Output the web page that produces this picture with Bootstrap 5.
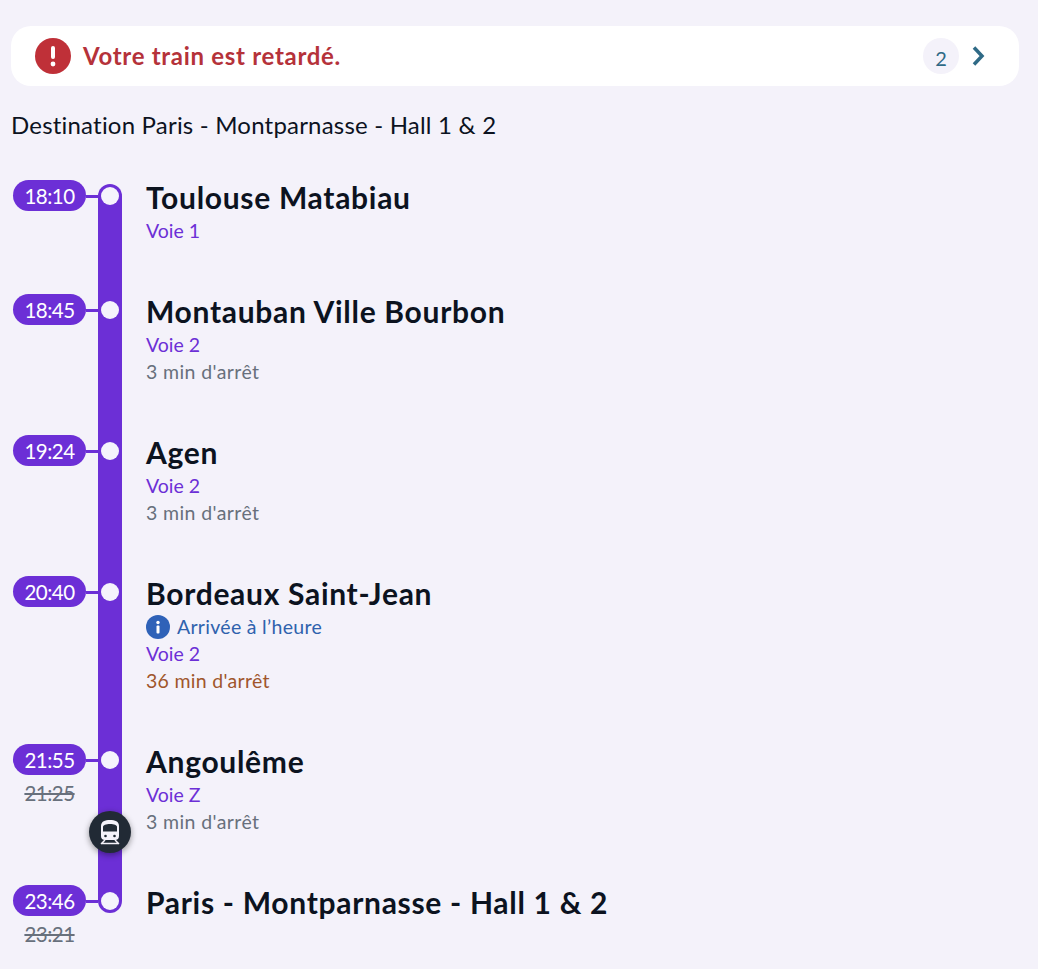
<!DOCTYPE html>
<html lang="fr">
  <head>
    <meta charset="UTF-8" />
    <title>Votre train</title>
    <link rel="stylesheet" href="https://cdn.jsdelivr.net/npm/bootstrap@5.3.3/dist/css/bootstrap.min.css" />
    <style>
      body { background: #f4f2fa; font-family: "Lato", "Liberation Sans", sans-serif; font-variant-ligatures: none; color: #0c131f; padding: 26px 19px 0 11px; }
      .alert-bar { background: #fff; border-radius: 20px; height: 60px; padding: 0 33px 0 24px; }
      .alert-text { color: #b5323a; font-size: 24px; font-weight: 700; margin-left: 12px; letter-spacing: .7px; }
      .count-dot { width: 36px; height: 36px; border-radius: 50%; background: #f4f2fa; color: #2f6a86; font-size: 20px; padding-top: 3px; margin-right: 11px; }
      .dest-line { font-size: 24px; line-height: 30px; margin: 24px 0 40px; letter-spacing: .2px; }
      .stop-row { margin-left: 2px; }
      .time-col { width: 73px; }
      .time-pill { height: 31px; border-radius: 16px; background: #6c2fd6; color: #fff; font-size: 20.5px; letter-spacing: -.5px; padding-top: 2px; }
      .time-old { color: #68707c; font-size: 20.5px; letter-spacing: -.5px; line-height: 27px; text-decoration: line-through; text-align: center; margin-top: 5px; }
      .link-bit { width: 12px; height: 3px; margin-top: 15px; background: #6c2fd6; }
      .rail-bit { width: 24px; background: #6c2fd6; position: relative; }
      .rail-first { margin-top: 4px; border-radius: 12px 12px 0 0; }
      .rail-last { height: 28px; border-radius: 0 0 12px 12px; }
      .stop-dot { position: absolute; left: 3px; top: 7px; width: 18px; height: 18px; border-radius: 50%; background: #f5f3fc; }
      .rail-first .stop-dot { top: 3px; }
      .train-dot { position: absolute; left: -9px; top: 67px; width: 42px; height: 42px; border-radius: 50%; background: #212a35; box-shadow: 0 2px 6px rgba(0,0,0,.4); z-index: 2; }
      .stop-body { margin-left: 24px; padding-bottom: 50px; }
      .stop-body.end { padding-bottom: 0; }
      .stop-name { font-size: 30px; font-weight: 700; line-height: 34px; padding-bottom: 3px; letter-spacing: .7px; }
      .stop-line { font-size: 19.5px; line-height: 27px; }
      .c-voie { color: #6c2fd6; }
      .c-wait { color: #68707c; letter-spacing: .4px; }
      .c-long { color: #a0562c; letter-spacing: .3px; }
      .c-info { color: #2f62ad; letter-spacing: .3px; }
      .info-ico { margin-right: 7px; }
    </style>
  </head>
  <body>
    <div class="alert-bar d-flex align-items-center">
      <svg width="36" height="36" viewBox="0 0 36 36"><circle cx="18" cy="18" r="18" fill="#bf3038" /><rect x="16" y="8" width="4" height="13" rx="2" fill="#fff" /><circle cx="18" cy="26" r="2.4" fill="#fff" /></svg>
      <span class="alert-text">Votre train est retardé.</span>
      <span class="count-dot d-flex align-items-center justify-content-center ms-auto">2</span>
      <svg width="16" height="20" viewBox="0 0 16 20"><path d="M4 1.500l8 8.500-8 8.500" fill="none" stroke="#2f6a86" stroke-width="3.500" /></svg>
    </div>
    <div class="dest-line">Destination Paris - Montparnasse - Hall 1 &amp; 2</div>

    <div id="stops"></div>

    <script>
      const stops = [
        { time: "18:10", name: "Toulouse Matabiau", lines: [["c-voie", "Voie 1"]] },
        { time: "18:45", name: "Montauban Ville Bourbon", lines: [["c-voie", "Voie 2"], ["c-wait", "3 min d'arrêt"]] },
        { time: "19:24", name: "Agen", lines: [["c-voie", "Voie 2"], ["c-wait", "3 min d'arrêt"]] },
        { time: "20:40", name: "Bordeaux Saint-Jean", info: "Arrivée à l’heure", lines: [["c-voie", "Voie 2"], ["c-long", "36 min d'arrêt"]] },
        { time: "21:55", old: "21:25", train: true, name: "Angoulême", lines: [["c-voie", "Voie Z"], ["c-wait", "3 min d'arrêt"]] },
        { time: "23:46", old: "23:21", name: "Paris - Montparnasse - Hall 1 & 2", lines: [] },
      ];
      const trainIcon = `<svg width="42" height="42" viewBox="0 0 42 42"><path d="M21 9c5 0 9 1.500 9 6v10c0 2.500-1.500 4-4 4H16c-2.500 0-4-1.500-4-4V15c0-4.500 4-6 9-6z" fill="#f4f2fa"/><path d="M14 16c0-2 3-3 7-3s7 1 7 3v4.500H14z" fill="#212a35"/><circle cx="16.500" cy="25" r="1.300" fill="#212a35"/><circle cx="25.500" cy="25" r="1.300" fill="#212a35"/><path d="M16 29l-4 4M26 29l4 4M13 32.500h16" fill="none" stroke="#f4f2fa" stroke-width="1.500"/></svg>`;
      const infoIcon = `<svg class="info-ico flex-shrink-0" width="24" height="24" viewBox="0 0 24 24"><circle cx="12" cy="12" r="12" fill="#2f62b8"/><circle cx="12" cy="7.500" r="1.700" fill="#fff"/><rect x="10.500" y="10.500" width="3" height="8" rx="1" fill="#fff"/></svg>`;
      document.getElementById("stops").innerHTML = stops
        .map((s, i) => {
          const first = i === 0;
          const last = i === stops.length - 1;
          return `<div class="stop-row d-flex">
            <div class="time-col flex-shrink-0">
              <div class="time-pill d-flex align-items-center justify-content-center">${s.time}</div>
              ${s.old ? `<div class="time-old">${s.old}</div>` : ""}
            </div>
            <div class="link-bit flex-shrink-0"></div>
            <div class="rail-bit flex-shrink-0 ${first ? "rail-first" : ""} ${last ? "rail-last" : ""}">
              <div class="stop-dot"></div>
              ${s.train ? `<div class="train-dot">${trainIcon}</div>` : ""}
            </div>
            <div class="stop-body ${last ? "end" : ""}">
              <div class="stop-name">${s.name.replace("&", "&amp;")}</div>
              ${s.info ? `<div class="stop-line c-info d-flex align-items-center">${infoIcon}${s.info}</div>` : ""}
              ${s.lines.map((l) => `<div class="stop-line ${l[0]}">${l[1]}</div>`).join("")}
            </div>
          </div>`;
        })
        .join("");
    </script>
    <script src="https://cdn.jsdelivr.net/npm/bootstrap@5.3.3/dist/js/bootstrap.bundle.min.js"></script>
  </body>
</html>
